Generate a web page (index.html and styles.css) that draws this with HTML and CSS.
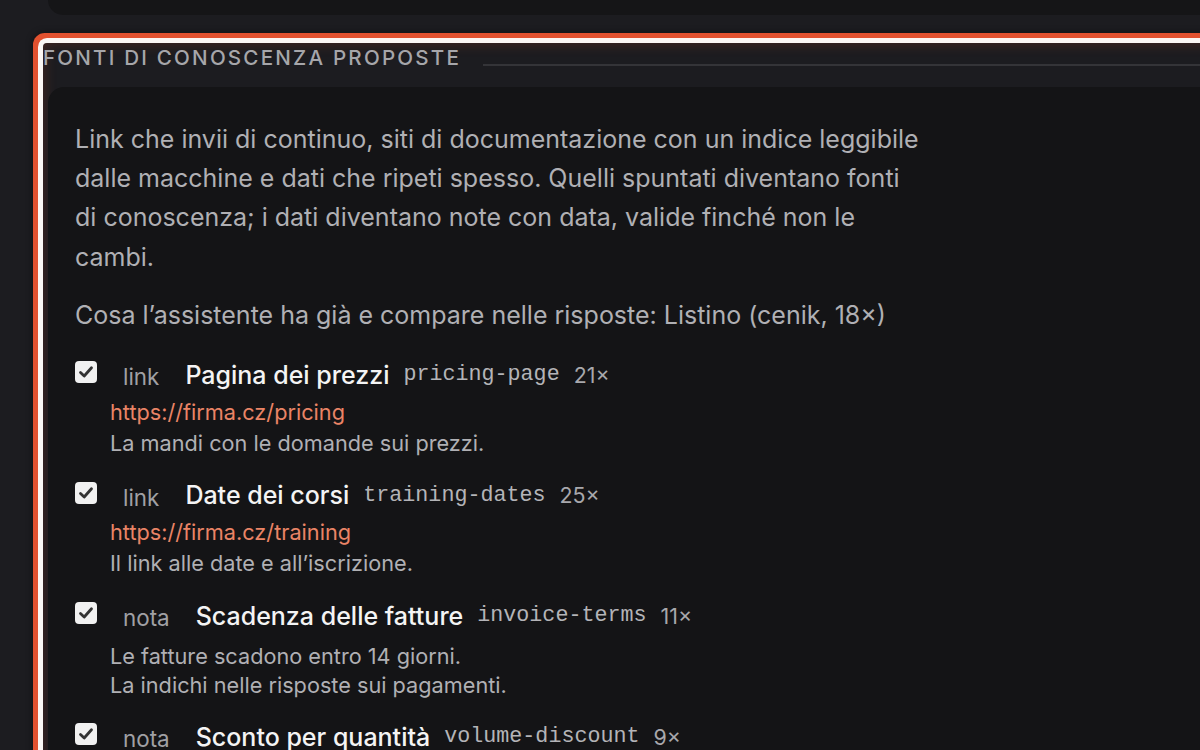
FILE: index.html
```html
<!DOCTYPE html>
<html lang="it">
<head>
<meta charset="utf-8">
<link rel="stylesheet" href="styles.css">
</head>
<body>
<div class="page">
  <div class="prev-card"></div>
  <section class="sources">
    <div class="sources-head">
      <h2 class="sources-title">Fonti di conoscenza proposte</h2>
      <div class="sources-rule"></div>
    </div>
    <div class="card">
      <p class="intro">Link che invii di continuo, siti di documentazione con un indice leggibile dalle macchine e dati che ripeti spesso. Quelli spuntati diventano fonti di conoscenza; i dati diventano note con data, valide finché non le cambi.</p>
      <p class="have">Cosa l’assistente ha già e compare nelle risposte: Listino (cenik, 18×)</p>
      <ul class="items">
        <li class="item">
          <div class="row">
            <span class="check"><svg viewBox="0 0 22 22" width="22" height="22"><path d="M5.5 11.5 L9.2 15 L16.5 6.8" fill="none" stroke="#333" stroke-width="2.8" stroke-linecap="round" stroke-linejoin="round"/></svg></span>
            <span class="kind">link</span>
            <span class="name">Pagina dei prezzi</span>
            <code class="slug">pricing-page</code>
            <span class="count">21×</span>
          </div>
          <div class="details">
            <div class="url">https://firma.cz/pricing</div>
            <div class="desc">La mandi con le domande sui prezzi.</div>
          </div>
        </li>
        <li class="item">
          <div class="row">
            <span class="check"><svg viewBox="0 0 22 22" width="22" height="22"><path d="M5.5 11.5 L9.2 15 L16.5 6.8" fill="none" stroke="#333" stroke-width="2.8" stroke-linecap="round" stroke-linejoin="round"/></svg></span>
            <span class="kind">link</span>
            <span class="name">Date dei corsi</span>
            <code class="slug">training-dates</code>
            <span class="count">25×</span>
          </div>
          <div class="details">
            <div class="url">https://firma.cz/training</div>
            <div class="desc">Il link alle date e all’iscrizione.</div>
          </div>
        </li>
        <li class="item">
          <div class="row">
            <span class="check"><svg viewBox="0 0 22 22" width="22" height="22"><path d="M5.5 11.5 L9.2 15 L16.5 6.8" fill="none" stroke="#333" stroke-width="2.8" stroke-linecap="round" stroke-linejoin="round"/></svg></span>
            <span class="kind">nota</span>
            <span class="name">Scadenza delle fatture</span>
            <code class="slug">invoice-terms</code>
            <span class="count">11×</span>
          </div>
          <div class="details details-note">
            <div class="note-line">Le fatture scadono entro 14 giorni.</div>
            <div class="note-line">La indichi nelle risposte sui pagamenti.</div>
          </div>
        </li>
        <li class="item">
          <div class="row">
            <span class="check"><svg viewBox="0 0 22 22" width="22" height="22"><path d="M5.5 11.5 L9.2 15 L16.5 6.8" fill="none" stroke="#333" stroke-width="2.8" stroke-linecap="round" stroke-linejoin="round"/></svg></span>
            <span class="kind">nota</span>
            <span class="name">Sconto per quantità</span>
            <code class="slug">volume-discount</code>
            <span class="count">9×</span>
          </div>
        </li>
      </ul>
    </div>
  </section>
</div>
</body>
</html>
```
FILE: styles.css
```css
* { box-sizing: border-box; }
html, body {
  margin: 0;
  padding: 0;
  background: #1c1c20;
  overflow: hidden;
  height: 750px;
}
body {
  font-family: Inter, "Noto Sans", sans-serif;
  color: #b0b0b4;
}
.page {
  width: 1320px;
  padding-left: 43px;
}
.prev-card {
  margin-left: 5px;
  height: 15px;
  background: #151517;
  border-radius: 0 0 0 16px;
  margin-bottom: 28px;
}
.sources {
  border-radius: 4px;
  background: #1c1c20;
  box-shadow:
    inset 0 0 14px rgba(200, 70, 40, 0.28),
    0 0 0 5px #fbf6f4,
    0 0 0 10px #e2512f,
    0 0 6px 11px rgba(0, 0, 0, 0.35);
  padding-bottom: 40px;
}
.sources-head {
  display: flex;
  align-items: flex-start;
  gap: 22px;
  height: 44px;
}
.sources-title {
  margin: 0;
  padding-top: 1px;
  font-size: 20.6px;
  line-height: 28px;
  font-weight: 500;
  text-transform: uppercase;
  letter-spacing: 2.2px;
  color: #a6a6aa;
  white-space: nowrap;
}
.sources-rule {
  flex: 1;
  margin-top: 21px;
  height: 2px;
  background: #343438;
}
.card {
  margin-left: 5px;
  background: #141416;
  border-radius: 16px 0 0 16px;
  padding: 33px 27px 30px 27px;
  min-height: 700px;
}
.intro {
  margin: 0;
  max-width: 848px;
  font-size: 25px;
  line-height: 39.2px;
  color: #b0b0b4;
}
.have {
  margin: 19px 0 0 0;
  font-size: 25px;
  line-height: 39px;
  color: #b0b0b4;
}
.items {
  list-style: none;
  margin: 22px 0 0 0;
  padding: 0;
  display: flex;
  flex-direction: column;
  gap: 18.5px;
}
.row {
  display: flex;
  align-items: center;
  height: 36px;
  white-space: nowrap;
}
.check {
  width: 22px;
  height: 22px;
  border-radius: 4px;
  background: #f1f1f1;
  display: inline-flex;
  margin-top: -5px;
  flex: none;
}
.check svg { display: block; }
.kind {
  margin-left: 26px;
  margin-right: 26px;
  font-size: 22.4px;
  color: #a0a0a4;
  padding-top: 4px;
}
.name {
  font-size: 25px;
  font-weight: 500;
  color: #f4f4f4;
}
.slug {
  margin-left: 14px;
  font-family: "Liberation Mono", "DejaVu Sans Mono", monospace;
  font-size: 21.7px;
  color: #b4b4b8;
}
.count {
  margin-left: 14px;
  font-size: 21.4px;
  color: #a8a8ac;
}
.details {
  margin-top: 4px;
  padding-left: 35px;
  font-size: 21.7px;
  line-height: 31px;
}
.url {
  color: #ea8466;
}
.desc {
  color: #b0b0b4;
}
.details-note {
  margin-top: 8.5px;
  line-height: 29px;
}
.note-line {
  color: #b0b0b4;
}
```
